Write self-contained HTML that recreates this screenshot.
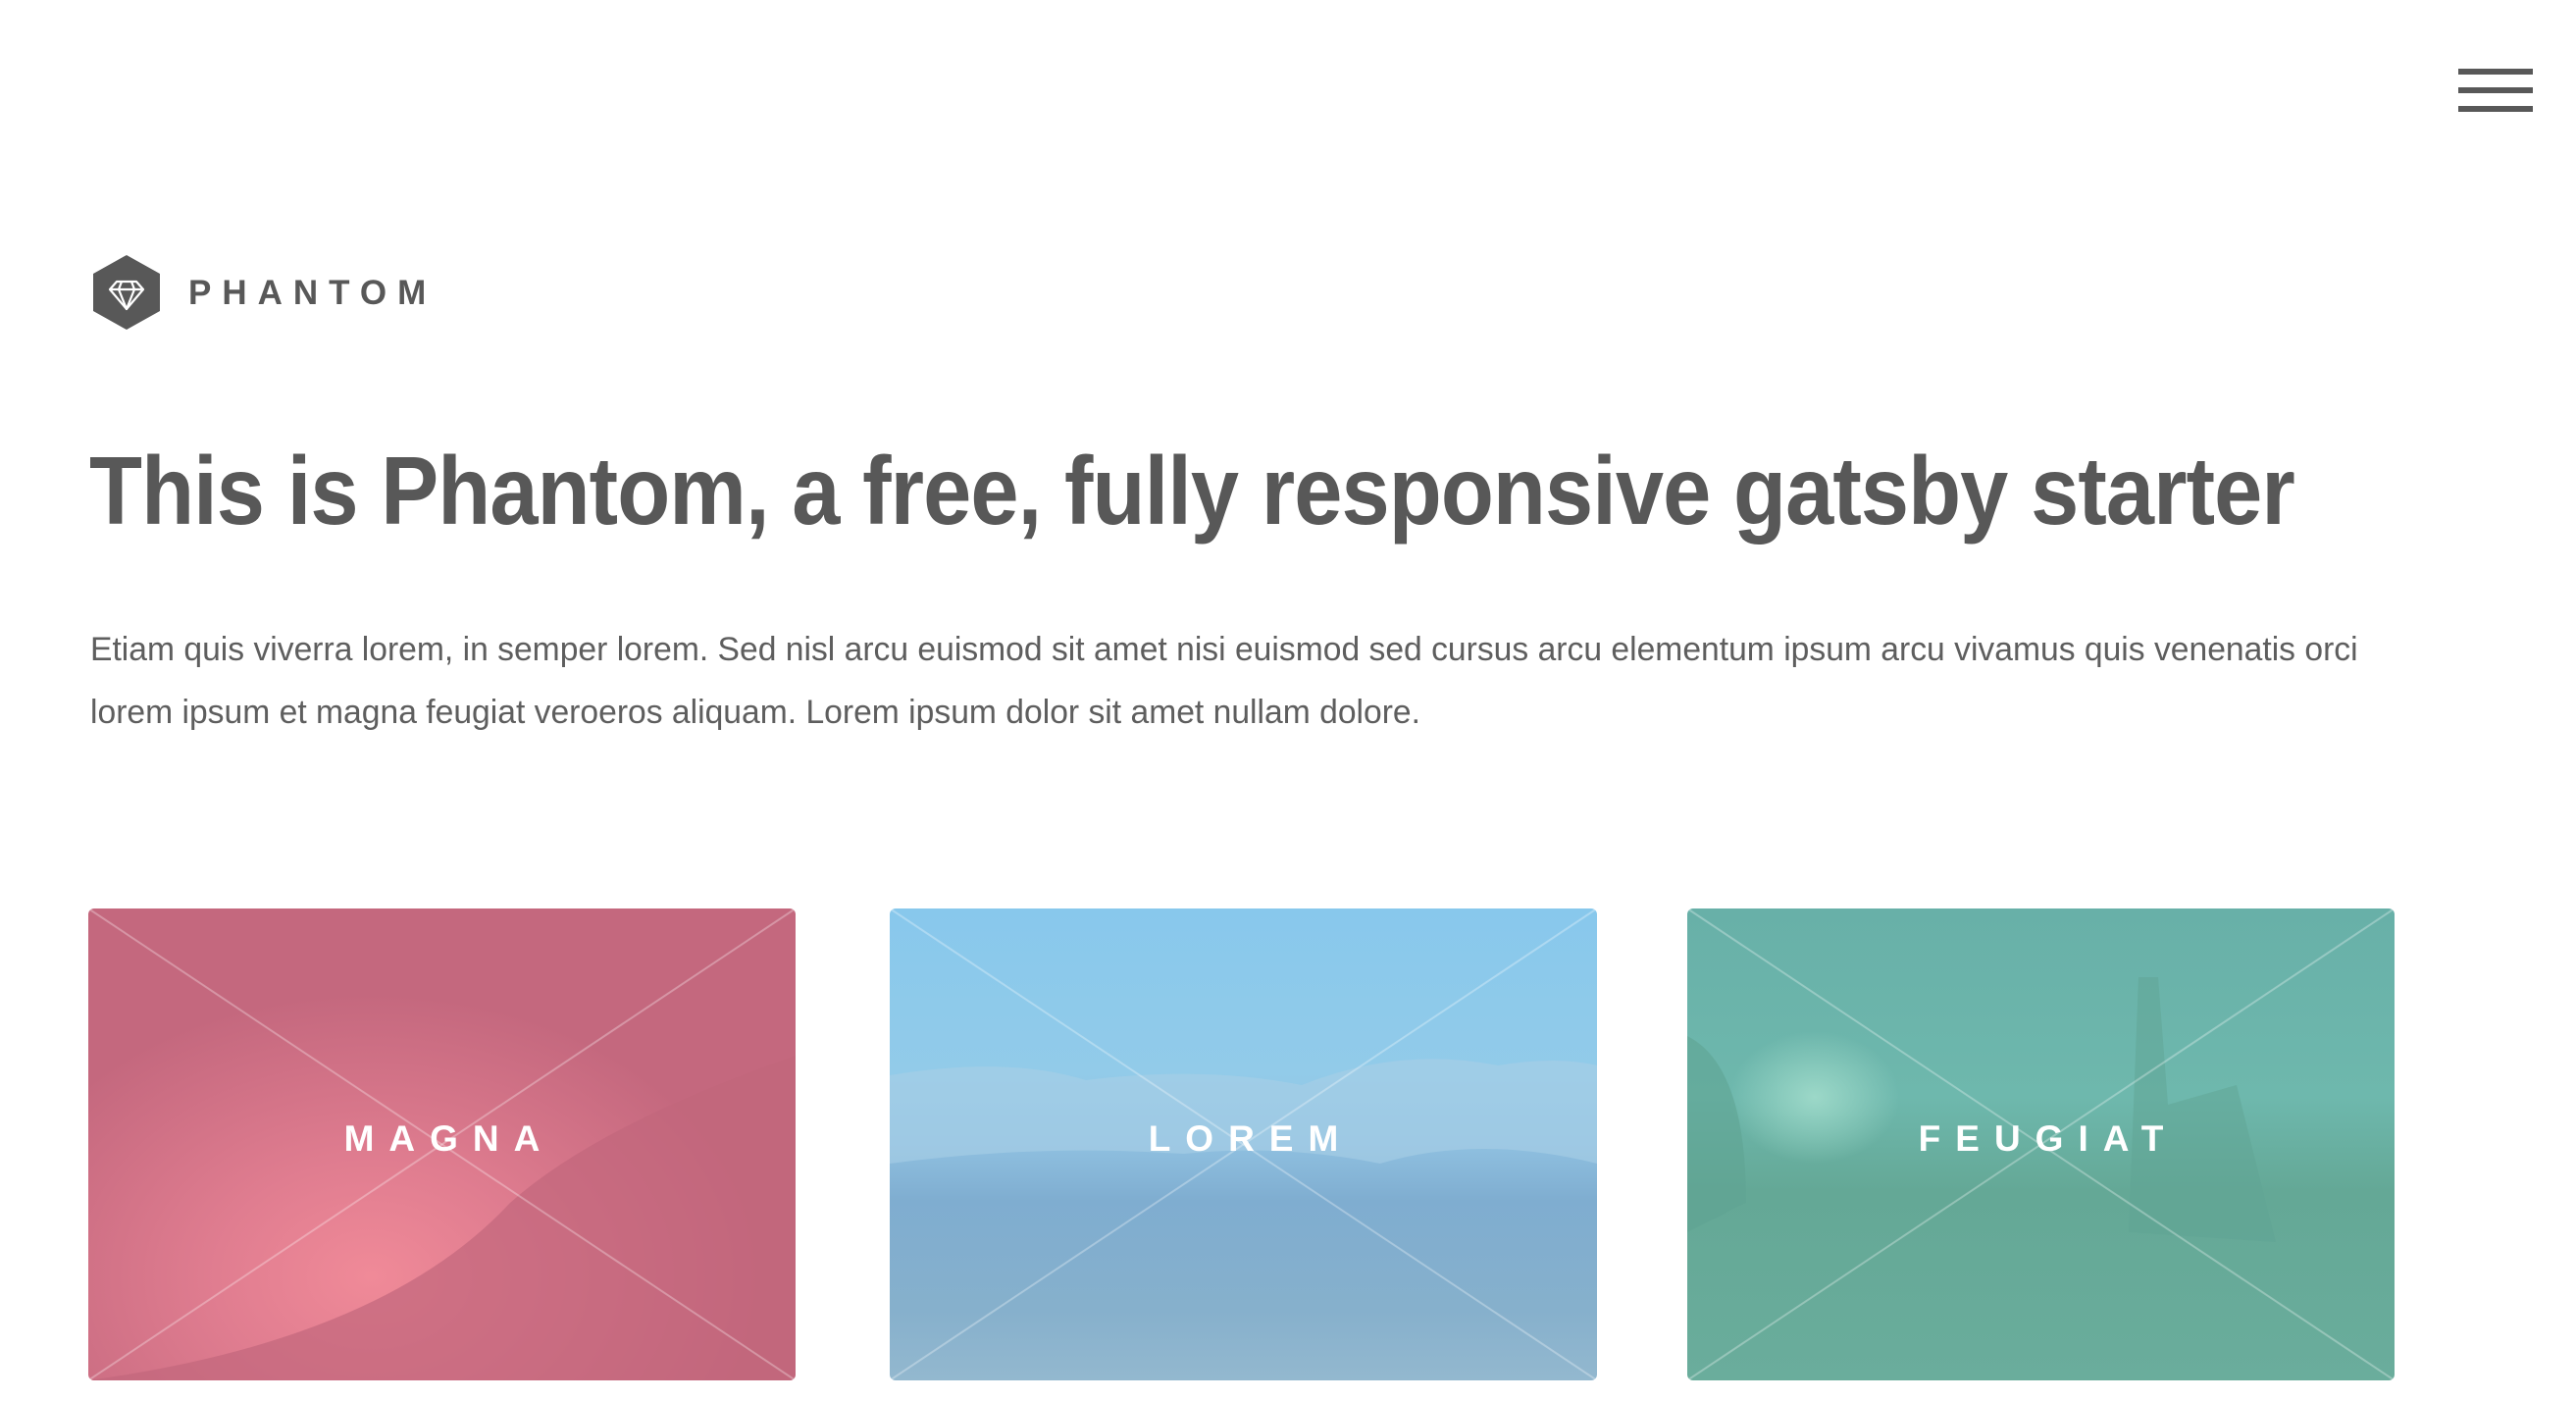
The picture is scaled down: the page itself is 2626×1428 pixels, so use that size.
<!DOCTYPE html>
<html><head><meta charset="utf-8"><style>
html,body{margin:0;padding:0;background:#fff;width:2626px;height:1428px;overflow:hidden;font-family:"Liberation Sans",sans-serif;color:#585858}
.abs{position:absolute}
.bar{position:absolute;left:2506px;width:76px;height:6px;background:#585858}
.brand{left:192px;top:279px;font-size:35px;font-weight:bold;letter-spacing:11px;line-height:40px}
h1{position:absolute;left:91px;top:440px;margin:0;font-size:98px;font-weight:bold;line-height:120px;white-space:nowrap;transform:scaleX(0.745);transform-origin:left top;letter-spacing:-1px;color:#585858}
.p{position:absolute;left:92px;top:630px;font-size:34px;line-height:64px;white-space:nowrap;transform-origin:left top;color:#5e5e5e}
.card{position:absolute;top:926px;width:721px;height:481px;border-radius:6px;overflow:hidden}
.card svg{position:absolute;left:0;top:0}
.lbl{position:absolute;left:0;right:0;top:215px;text-align:center;color:#fff;font-weight:bold;font-size:37px;letter-spacing:15px;padding-left:15px;line-height:40px}
</style></head><body>
<div class="bar" style="top:70px"></div>
<div class="bar" style="top:89px"></div>
<div class="bar" style="top:108px"></div>

<svg class="abs" style="left:95px;top:260px" width="68" height="76" viewBox="0 0 68 76">
<polygon points="34,0 68,19 68,57 34,76 0,57 0,19" fill="#585858"/>
<g fill="none" stroke="#fff" stroke-width="2.2" stroke-linejoin="round">
<polygon points="24,27 44,27 51,35 34,55 17,35"/>
<line x1="17" y1="35" x2="51" y2="35"/>
<polyline points="29,27 26,35 34,55 42,35 39,27"/>
</g></svg>
<div class="abs brand">PHANTOM</div>

<h1>This is Phantom, a free, fully responsive gatsby starter</h1>
<div class="p" id="p">Etiam quis viverra lorem, in semper lorem. Sed nisl arcu euismod sit amet nisi euismod sed cursus arcu elementum ipsum arcu vivamus quis venenatis orci<br>lorem ipsum et magna feugiat veroeros aliquam. Lorem ipsum dolor sit amet nullam dolore.</div>

<div class="card" style="left:90px;background:radial-gradient(ellipse 55% 60% at 40% 78%,#f08a98 0%,#e07d90 40%,rgba(196,104,126,0) 100%),#c4687e">
<svg width="721" height="481"><path d="M0 481 L0 481 Q300 440 430 300 Q520 220 721 150 L721 481 Z" fill="#c2667c" opacity="0.7"/><line x1="0" y1="0" x2="721" y2="481" stroke="#fff" stroke-opacity=".3" stroke-width="2"/><line x1="721" y1="0" x2="0" y2="481" stroke="#fff" stroke-opacity=".3" stroke-width="2"/></svg>
<div class="lbl">MAGNA</div></div>

<div class="card" style="left:907px;background:linear-gradient(180deg,#88c8ec 0%,#92cbe9 35%,#8fc0e0 50%,#7fadd0 62%,#86b0cc 85%,#93b8cf 100%)">
<svg width="721" height="481"><path d="M0 170 Q120 150 200 175 Q320 160 420 180 Q520 140 620 160 Q680 150 721 160 L721 260 Q600 230 500 260 Q400 240 300 250 Q150 240 0 260 Z" fill="#a9cfe6" opacity=".6"/><line x1="0" y1="0" x2="721" y2="481" stroke="#fff" stroke-opacity=".3" stroke-width="2"/><line x1="721" y1="0" x2="0" y2="481" stroke="#fff" stroke-opacity=".3" stroke-width="2"/></svg>
<div class="lbl">LOREM</div></div>

<div class="card" style="left:1720px;background:radial-gradient(ellipse 12% 14% at 18% 40%,#9cd8c8 0%,rgba(104,176,162,0) 100%),linear-gradient(180deg,#68b0a8 0%,#6eb8ad 40%,#64a896 60%,#6aad9c 100%)">
<svg width="721" height="481"><path d="M0 130 Q60 160 60 300 L0 330 Z" fill="#5fa493" opacity=".6"/><path d="M450 330 L460 70 L480 70 L490 200 L560 180 L600 340 Z" fill="#5fa493" opacity=".5"/><line x1="0" y1="0" x2="721" y2="481" stroke="#fff" stroke-opacity=".3" stroke-width="2"/><line x1="721" y1="0" x2="0" y2="481" stroke="#fff" stroke-opacity=".3" stroke-width="2"/></svg>
<div class="lbl">FEUGIAT</div></div>
<script>
var p=document.getElementById('p');var w=p.scrollWidth;if(w>0){p.style.transform='scaleX('+(2312/w)+')';}
var h=document.querySelector('h1');h.style.transform='none';var hw=h.scrollWidth;if(hw>0)h.style.transform='scaleX('+(2248/hw)+')';
</script>
</body></html>
